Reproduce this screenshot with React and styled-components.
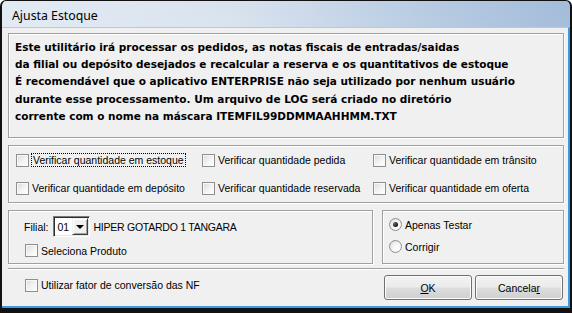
import React from 'react';
import styled, { createGlobalStyle } from 'styled-components';

const GlobalStyle = createGlobalStyle`
  html, body { margin: 0; padding: 0; background: #fff; }
  body {
    font-family: "Liberation Sans", Arial, sans-serif;
    font-size: 10.5px;
    color: #000;
  }
  * { box-sizing: border-box; }
`;

const Window = styled.div`
  width: 572px;
  height: 313px;
  display: flex;
  flex-direction: column;
  border: 2px solid #111;
  border-top-width: 1px;
  border-bottom-width: 5px;
  border-radius: 6px 6px 0 0;
  overflow: hidden;
  background:
    linear-gradient(to bottom, rgba(255, 255, 255, 0) 0%, rgba(255, 255, 255, 0.3) 100%),
    linear-gradient(to right, #e2eaf3 0%, #d9e3ef 40%, #b7cbe2 75%, #a3bcda 100%);
`;

const TitleBar = styled.div`
  height: 26px;
  display: flex;
  align-items: center;
  padding-left: 10px;
  padding-top: 2px;
  font-family: "Noto Sans", "Open Sans", sans-serif;
  font-size: 12.3px;
  color: #000;
`;

const Client = styled.div`
  flex: 1;
  display: flex;
  flex-direction: column;
  padding: 5px 4px 0 6px;
  background: #f0f0f0;
  border-top: 1px solid #b9c8da;
  border-right: 2px solid #3c9be0;
  border-bottom: 2px solid #3c9be0;
`;

const GroupBox = styled.div`
  height: ${p => p.$h}px;
  margin-top: ${p => p.$mt || 0}px;
  border: 1px solid #a0a0a0;
  box-shadow: inset 1px 1px 0 #fff, 1px 1px 0 #fff;
`;

const InfoBox = styled(GroupBox)`
  padding: 5px 0 0 6px;
  font-family: "DejaVu Sans", sans-serif;
  font-weight: bold;
  font-size: 10.5px;
  line-height: 17.2px;
`;

const CheckGrid = styled(GroupBox)`
  display: grid;
  grid-template-columns: 186px 171px 1fr;
  grid-auto-rows: 13px;
  row-gap: 15px;
  align-content: center;
  padding-left: 7px;
`;

const Row = styled.div`
  display: flex;
  align-items: center;
  gap: ${p => p.$gap ?? 3}px;
  margin-top: ${p => p.$mt || 0}px;
`;

const Option = styled.label`
  display: flex;
  align-items: center;
  gap: 3px;
  height: 13px;
  white-space: nowrap;
  margin-left: ${p => p.$ml || 0}px;
  margin-top: ${p => p.$mt || 0}px;
`;

const Box = styled.span`
  width: 13px;
  height: 13px;
  flex: none;
  border: 1px solid #8e8f8f;
  background: linear-gradient(135deg, #dadada 0%, #f4f4f4 55%, #fff 100%);
  box-shadow: inset 1px 1px 0 #f8f8f8;
`;

const Circle = styled.span`
  width: 13px;
  height: 13px;
  flex: none;
  border-radius: 50%;
  border: 1px solid #8e8f8f;
  background: radial-gradient(circle at 65% 65%, #fff 0%, #f2f2f2 50%, #d2d2d2 100%);
  display: flex;
  align-items: center;
  justify-content: center;

  &::after {
    content: '';
    display: ${p => (p.$on ? 'block' : 'none')};
    width: 5px;
    height: 5px;
    border-radius: 50%;
    background: radial-gradient(circle at 35% 35%, #6a6a6a, #111 70%);
  }
`;

const Focus = styled.span`
  outline: 1px dotted #000;
  outline-offset: 0;
  padding: 0 1px;
`;

const BottomRow = styled.div`
  display: flex;
  gap: 9px;
  margin-top: 7px;
`;

const FilialBox = styled(GroupBox)`
  width: 365px;
  padding: 5px 0 0 15px;
`;

const RadioBox = styled(GroupBox)`
  flex: 1;
  display: flex;
  flex-direction: column;
  gap: 9px;
  padding: 7px 0 0 6px;
`;

const Combo = styled.div`
  width: 37px;
  height: 21px;
  display: flex;
  align-items: center;
  justify-content: space-between;
  padding: 0 1px 0 4px;
  background: #fff;
  border: 1px solid;
  border-color: #7a7a7a #fff #fff #7a7a7a;
  box-shadow: inset 1px 1px 0 #2e2e2e, inset -1px -1px 0 #e3e3e3;
`;

const DropButton = styled.span`
  width: 16px;
  height: 17px;
  display: flex;
  align-items: center;
  justify-content: center;
  background: #f0f0f0;
  border: 1px solid;
  border-color: #f0f0f0 #404040 #404040 #f0f0f0;
  box-shadow: inset 1px 1px 0 #fff, inset -1px -1px 0 #a0a0a0;

  &::after {
    content: '';
    border-left: 4px solid transparent;
    border-right: 4px solid transparent;
    border-top: 4px solid #000;
  }
`;

const StoreName = styled.span`
  letter-spacing: -0.25px;
  white-space: nowrap;
`;

const Separator = styled.div`
  height: 2px;
  margin-top: 4px;
  border-top: 1px solid #a0a0a0;
  border-bottom: 1px solid #fff;
`;

const Footer = styled.div`
  display: flex;
  align-items: center;
  margin-top: 5px;
  padding: 0 1px 0 17px;
`;

const Buttons = styled.div`
  margin-left: auto;
  display: flex;
  gap: 3px;
`;

const Button = styled.button`
  width: 88px;
  height: 25px;
  padding: 0;
  font: inherit;
  color: #000;
  border: 1px solid #707070;
  border-radius: 3px;
  background: linear-gradient(to bottom, #f2f2f2 0%, #ebebeb 48%, #dddddd 52%, #cfcfcf 100%);
  box-shadow: inset 0 0 0 1px #fcfcfc;
`;

const messages = [
  'Este utilitário irá processar os pedidos, as notas fiscais de entradas/saidas',
  'da filial ou depósito desejados e recalcular a reserva e os quantitativos de estoque',
  'É recomendável que o aplicativo ENTERPRISE não seja utilizado por nenhum usuário',
  'durante esse processamento. Um arquivo de LOG será criado no diretório',
  'corrente com o nome na máscara ITEMFIL99DDMMAAHHMM.TXT',
];

const checks = [
  'Verificar quantidade em estoque',
  'Verificar quantidade pedida',
  'Verificar quantidade em trânsito',
  'Verificar quantidade em depósito',
  'Verificar quantidade reservada',
  'Verificar quantidade em oferta',
];

const Check = ({ children, ml, mt }) => (
  <Option $ml={ml} $mt={mt}>
    <Box />
    <span>{children}</span>
  </Option>
);

export default function App() {
  return (
    <>
      <GlobalStyle />
      <Window>
        <TitleBar>Ajusta Estoque</TitleBar>
        <Client>
          <InfoBox $h={105}>
            {messages.map(line => (
              <div key={line}>{line}</div>
            ))}
          </InfoBox>

          <CheckGrid $h={58} $mt={7}>
            {checks.map((label, i) => (
              <Option key={label}>
                <Box />
                {i === 0 ? <Focus>{label}</Focus> : <span>{label}</span>}
              </Option>
            ))}
          </CheckGrid>

          <BottomRow>
            <FilialBox $h={54}>
              <Row $gap={4}>
                <span>Filial:</span>
                <Combo>
                  <span>01</span>
                  <DropButton />
                </Combo>
                <StoreName>HIPER GOTARDO 1 TANGARA</StoreName>
              </Row>
              <Row $mt={7}>
                <Check ml={1}>Seleciona Produto</Check>
              </Row>
            </FilialBox>
            <RadioBox $h={54}>
              <Option>
                <Circle $on />
                <span>Apenas Testar</span>
              </Option>
              <Option>
                <Circle />
                <span>Corrigir</span>
              </Option>
            </RadioBox>
          </BottomRow>

          <Separator />

          <Footer>
            <Check mt={-5}>Utilizar fator de conversão das NF</Check>
            <Buttons>
              <Button>
                <u>O</u>K
              </Button>
              <Button>
                Cancela<u>r</u>
              </Button>
            </Buttons>
          </Footer>
        </Client>
      </Window>
    </>
  );
}
